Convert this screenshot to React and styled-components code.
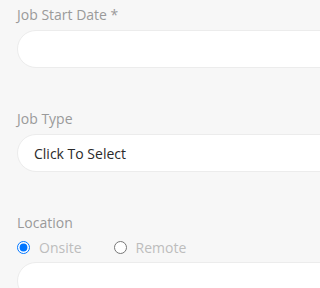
import React, { useState } from 'react';
import styled, { createGlobalStyle } from 'styled-components';

const GlobalStyle = createGlobalStyle`
  html, body {
    margin: 0;
    padding: 0;
    background: #f7f7f7;
    overflow: hidden;
  }
`;

export default function App() {
  const [location, setLocation] = useState('onsite');

  return (
    <>
      <GlobalStyle />
      <Page>
        <Field>
          <Label>Job Start Date *</Label>
          <Input />
        </Field>
        <Field>
          <Label>Job Type</Label>
          <Select>Click To Select</Select>
        </Field>
        <Field>
          <Label>Location</Label>
          <RadioRow>
            <RadioOption>
              <input
                type='radio'
                name='location'
                checked={location === 'onsite'}
                onChange={() => setLocation('onsite')}
              />
              Onsite
            </RadioOption>
            <RadioOption>
              <input
                type='radio'
                name='location'
                checked={location === 'remote'}
                onChange={() => setLocation('remote')}
              />
              Remote
            </RadioOption>
          </RadioRow>
          <Input />
        </Field>
      </Page>
    </>
  );
}

const Page = styled.div`
  width: 340px;
  padding: 5px 0 0 17px;
  font-family: 'Open Sans', 'Noto Sans', sans-serif;
  font-size: 14px;
  line-height: 19px;
  display: flex;
  flex-direction: column;
  gap: 41px;
`;

const Field = styled.div`
  display: flex;
  flex-direction: column;
`;

const Label = styled.label`
  color: #9a9a9a;
  margin-bottom: 6px;
`;

const Input = styled.div`
  height: 38px;
  box-sizing: border-box;
  background: #fff;
  border: 1px solid #ececec;
  border-radius: 19px;
`;

const Select = styled(Input)`
  display: flex;
  align-items: center;
  padding-left: 16px;
  color: #2a2a2a;
`;

const RadioRow = styled.div`
  display: flex;
  gap: 32px;
  margin: 0 0 5px;
`;

const RadioOption = styled.label`
  display: flex;
  align-items: center;
  gap: 9px;
  color: #bdbdbd;

  input {
    margin: 0;
    width: 13px;
    height: 13px;
  }
`;
